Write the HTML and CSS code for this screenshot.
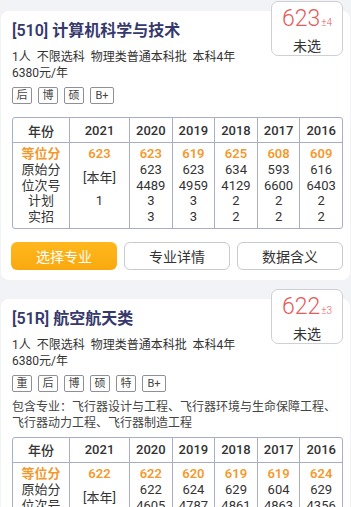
FILE: index.html
```html
<!DOCTYPE html>
<html lang="zh">
<head>
<meta charset="utf-8">
<link rel="stylesheet" href="styles.css">
</head>
<body>
<div class="card">
  <div class="score"><div class="score-num">623<small>±4</small></div><div class="score-state">未选</div></div>
  <div class="title">[510] 计算机科学与技术</div>
  <div class="info">1人&nbsp; 不限选科&nbsp; 物理类普通本科批&nbsp; 本科4年</div>
  <div class="info">6380元/年</div>
  <div class="tags"><span class="tag">后</span><span class="tag">博</span><span class="tag">硕</span><span class="tag wide">B+</span></div>
  <table class="grid">
    <colgroup><col class="c-label"><col class="c-cur"><col><col><col><col><col></colgroup>
    <thead><tr><th>年份</th><th>2021</th><th>2020</th><th>2019</th><th>2018</th><th>2017</th><th>2016</th></tr></thead>
    <tbody><tr>
      <td><div class="hl">等位分</div><div>原始分</div><div>位次号</div><div>计划</div><div>实招</div></td>
      <td><div class="hl">623</div><div class="two">[本年]</div><div>1</div><div>&nbsp;</div></td>
      <td><div class="hl">623</div><div>623</div><div>4489</div><div>3</div><div>3</div></td>
      <td><div class="hl">619</div><div>623</div><div>4959</div><div>3</div><div>3</div></td>
      <td><div class="hl">625</div><div>634</div><div>4129</div><div>2</div><div>2</div></td>
      <td><div class="hl">608</div><div>593</div><div>6600</div><div>2</div><div>2</div></td>
      <td><div class="hl">609</div><div>616</div><div>6403</div><div>2</div><div>2</div></td>
    </tr></tbody>
  </table>
  <div class="actions"><button class="btn primary">选择专业</button><button class="btn">专业详情</button><button class="btn">数据含义</button></div>
</div>

<div class="card">
  <div class="score"><div class="score-num">622<small>±3</small></div><div class="score-state">未选</div></div>
  <div class="title">[51R] 航空航天类</div>
  <div class="info">1人&nbsp; 不限选科&nbsp; 物理类普通本科批&nbsp; 本科4年</div>
  <div class="info">6380元/年</div>
  <div class="tags"><span class="tag">重</span><span class="tag">后</span><span class="tag">博</span><span class="tag">硕</span><span class="tag">特</span><span class="tag wide">B+</span></div>
  <div class="includes">包含专业：飞行器设计与工程、飞行器环境与生命保障工程、飞行器动力工程、飞行器制造工程</div>
  <table class="grid">
    <colgroup><col class="c-label"><col class="c-cur"><col><col><col><col><col></colgroup>
    <thead><tr><th>年份</th><th>2021</th><th>2020</th><th>2019</th><th>2018</th><th>2017</th><th>2016</th></tr></thead>
    <tbody><tr>
      <td><div class="hl">等位分</div><div>原始分</div><div>位次号</div><div>计划</div><div>实招</div></td>
      <td><div class="hl">622</div><div class="two">[本年]</div><div>1</div><div>&nbsp;</div></td>
      <td><div class="hl">622</div><div>622</div><div>4605</div><div>3</div><div>3</div></td>
      <td><div class="hl">620</div><div>624</div><div>4787</div><div>3</div><div>3</div></td>
      <td><div class="hl">619</div><div>629</div><div>4861</div><div>2</div><div>2</div></td>
      <td><div class="hl">619</div><div>604</div><div>4863</div><div>2</div><div>2</div></td>
      <td><div class="hl">624</div><div>629</div><div>4356</div><div>2</div><div>2</div></td>
    </tr></tbody>
  </table>
  <div class="actions"><button class="btn primary">选择专业</button><button class="btn">专业详情</button><button class="btn">数据含义</button></div>
</div>
</body>
</html>
```
FILE: styles.css
```css
* { box-sizing: border-box; }
body {
  margin: 0;
  background: #f2f3f7;
  font-family: Roboto, "Noto Sans CJK SC", sans-serif;
  color: #333;
}
.card {
  position: relative;
  margin: 11px 1px 0 1px;
  background: #fff;
  border-radius: 8px;
  padding: 9px 7px 10px 11px;
}
.card + .card { margin-top: 19px; }
.score {
  position: absolute;
  top: -10px;
  right: 7px;
  width: 72px;
  height: 55px;
  background: #fff;
  border: 1px solid #cfd0d6;
  border-radius: 7px;
  text-align: center;
  padding-top: 4px;
}
.score-num {
  color: #e25c5c;
  font-size: 23px;
  line-height: 26px;
  font-weight: 300;
}
.score-num small {
  font-size: 10px;
  margin-left: 1px;
}
.score-state {
  font-size: 14px;
  line-height: 18px;
  color: #333;
  margin-top: 1px;
}
.title {
  font-size: 16px;
  line-height: 22px;
  font-weight: 600;
  color: #36396c;
}
.info {
  font-size: 12px;
  line-height: 16px;
  color: #333;
}
.title + .info { margin-top: 7px; }
.tags {
  display: flex;
  gap: 6px;
  margin-top: 6px;
}
.tag {
  width: 20px;
  height: 17px;
  border: 1px solid #8f8f95;
  border-radius: 2px;
  font-size: 11px;
  line-height: 15px;
  text-align: center;
  color: #444;
}
.tag.wide { width: 24px; }
.includes {
  margin-top: 7px;
  font-size: 12px;
  line-height: 16px;
  color: #444;
}
.grid {
  width: 331px;
  margin-top: 13px;
  border-collapse: separate;
  border-spacing: 0;
  border: 1px solid #a9aec6;
  border-radius: 3px;
  table-layout: fixed;
}
.includes + .grid { margin-top: 6px; }
.c-label { width: 56px; }
.c-cur { width: 60px; }
.grid th, .grid td {
  text-align: center;
  border-left: 1px solid #a9aec6;
  padding: 0;
}
.grid th:first-child, .grid td:first-child { border-left: none; }
.grid th {
  height: 25px;
  font-size: 13px;
  font-weight: 500;
  color: #333;
  border-bottom: 1px solid #a9aec6;
}
.grid td {
  padding: 3px 0 3px;
  font-size: 13px;
  line-height: 15.8px;
  color: #333;
  vertical-align: top;
}
.grid .hl {
  color: #f39a2e;
  font-weight: 600;
}
.grid .two {
  height: 31.6px;
  line-height: 31.6px;
}
.actions {
  display: grid;
  grid-template-columns: repeat(3, 1fr);
  gap: 7px;
  margin: 13px 0 0 -1px;
}
.btn {
  height: 28px;
  border: 1px solid #c9cad0;
  border-radius: 6px;
  background: #fff;
  font-family: inherit;
  font-size: 14px;
  color: #333;
  padding: 0;
}
.btn.primary {
  border: none;
  background: linear-gradient(180deg, #ffb81c, #f9a90f);
  color: #fff;
}
```
